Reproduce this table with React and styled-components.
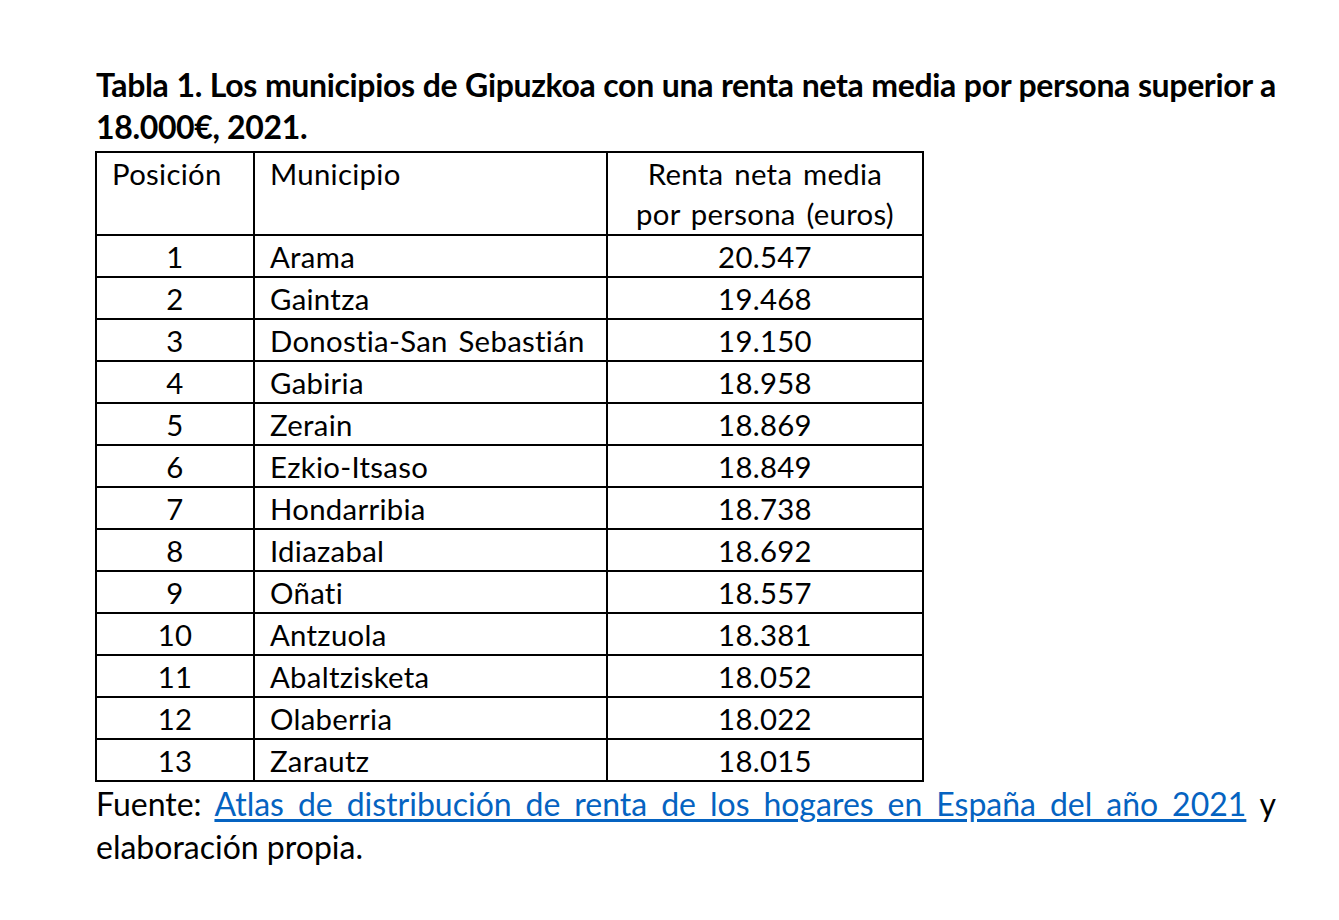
import React from "react";
import styled, { createGlobalStyle } from "styled-components";

const GlobalStyle = createGlobalStyle`
  html, body {
    margin: 0;
    padding: 0;
    background: #ffffff;
  }
  body {
    font-family: Lato, "Open Sans", sans-serif;
    color: #000000;
  }
`;

const Page = styled.main`
  padding: 64px 0 0 96px;
  width: 1180px;
`;

const Title = styled.h1`
  margin: 0;
  font-size: 32px;
  line-height: 42px;
  font-weight: 700;
  letter-spacing: -0.35px;
  text-align: justify;
`;

const Table = styled.div`
  margin-top: 3px;
  margin-left: -1px;
  display: grid;
  grid-template-columns: 158px 353px 316px;
  width: max-content;
  border-left: 2px solid #000;
  border-top: 2px solid #000;
`;

const Cell = styled.div`
  box-sizing: border-box;
  height: ${(p) => (p.$head ? 83 : 42)}px;
  border-right: 2px solid #000;
  border-bottom: 2px solid #000;
  font-size: 29.33px;
  line-height: ${(p) => (p.$head ? "40px" : "35.8px")};
  letter-spacing: 0.3px;
  word-spacing: 3px;
  padding-top: ${(p) => (p.$head ? "1px" : "3px")};
  padding-left: ${(p) => (p.$align === "left" ? "15px" : "0")};
  text-align: ${(p) => p.$align || "center"};
  white-space: nowrap;
`;

const Footer = styled.p`
  margin: 0;
  font-size: 32px;
  line-height: 43px;
  text-align: justify;
`;

const Link = styled.a`
  color: #0563c1;
  text-decoration: underline;
  text-underline-offset: 3px;
`;

const rows = [
  ["1", "Arama", "20.547"],
  ["2", "Gaintza", "19.468"],
  ["3", "Donostia-San Sebastián", "19.150"],
  ["4", "Gabiria", "18.958"],
  ["5", "Zerain", "18.869"],
  ["6", "Ezkio-Itsaso", "18.849"],
  ["7", "Hondarribia", "18.738"],
  ["8", "Idiazabal", "18.692"],
  ["9", "Oñati", "18.557"],
  ["10", "Antzuola", "18.381"],
  ["11", "Abaltzisketa", "18.052"],
  ["12", "Olaberria", "18.022"],
  ["13", "Zarautz", "18.015"],
];

export default function App() {
  return (
    <>
      <GlobalStyle />
      <Page>
        <Title>
          Tabla 1. Los municipios de Gipuzkoa con una renta neta media por persona superior a
          18.000€, 2021.
        </Title>
        <Table>
          <Cell $head $align="left">Posición</Cell>
          <Cell $head $align="left">Municipio</Cell>
          <Cell $head>
            Renta neta media
            <br />
            por persona (euros)
          </Cell>
          {rows.map(([pos, name, value]) => (
            <React.Fragment key={pos}>
              <Cell>{pos}</Cell>
              <Cell $align="left">{name}</Cell>
              <Cell>{value}</Cell>
            </React.Fragment>
          ))}
        </Table>
        <Footer>
          Fuente:{" "}
          <Link href="#">
            Atlas de distribución de renta de los hogares en España del año 2021
          </Link>{" "}
          y elaboración propia.
        </Footer>
      </Page>
    </>
  );
}
